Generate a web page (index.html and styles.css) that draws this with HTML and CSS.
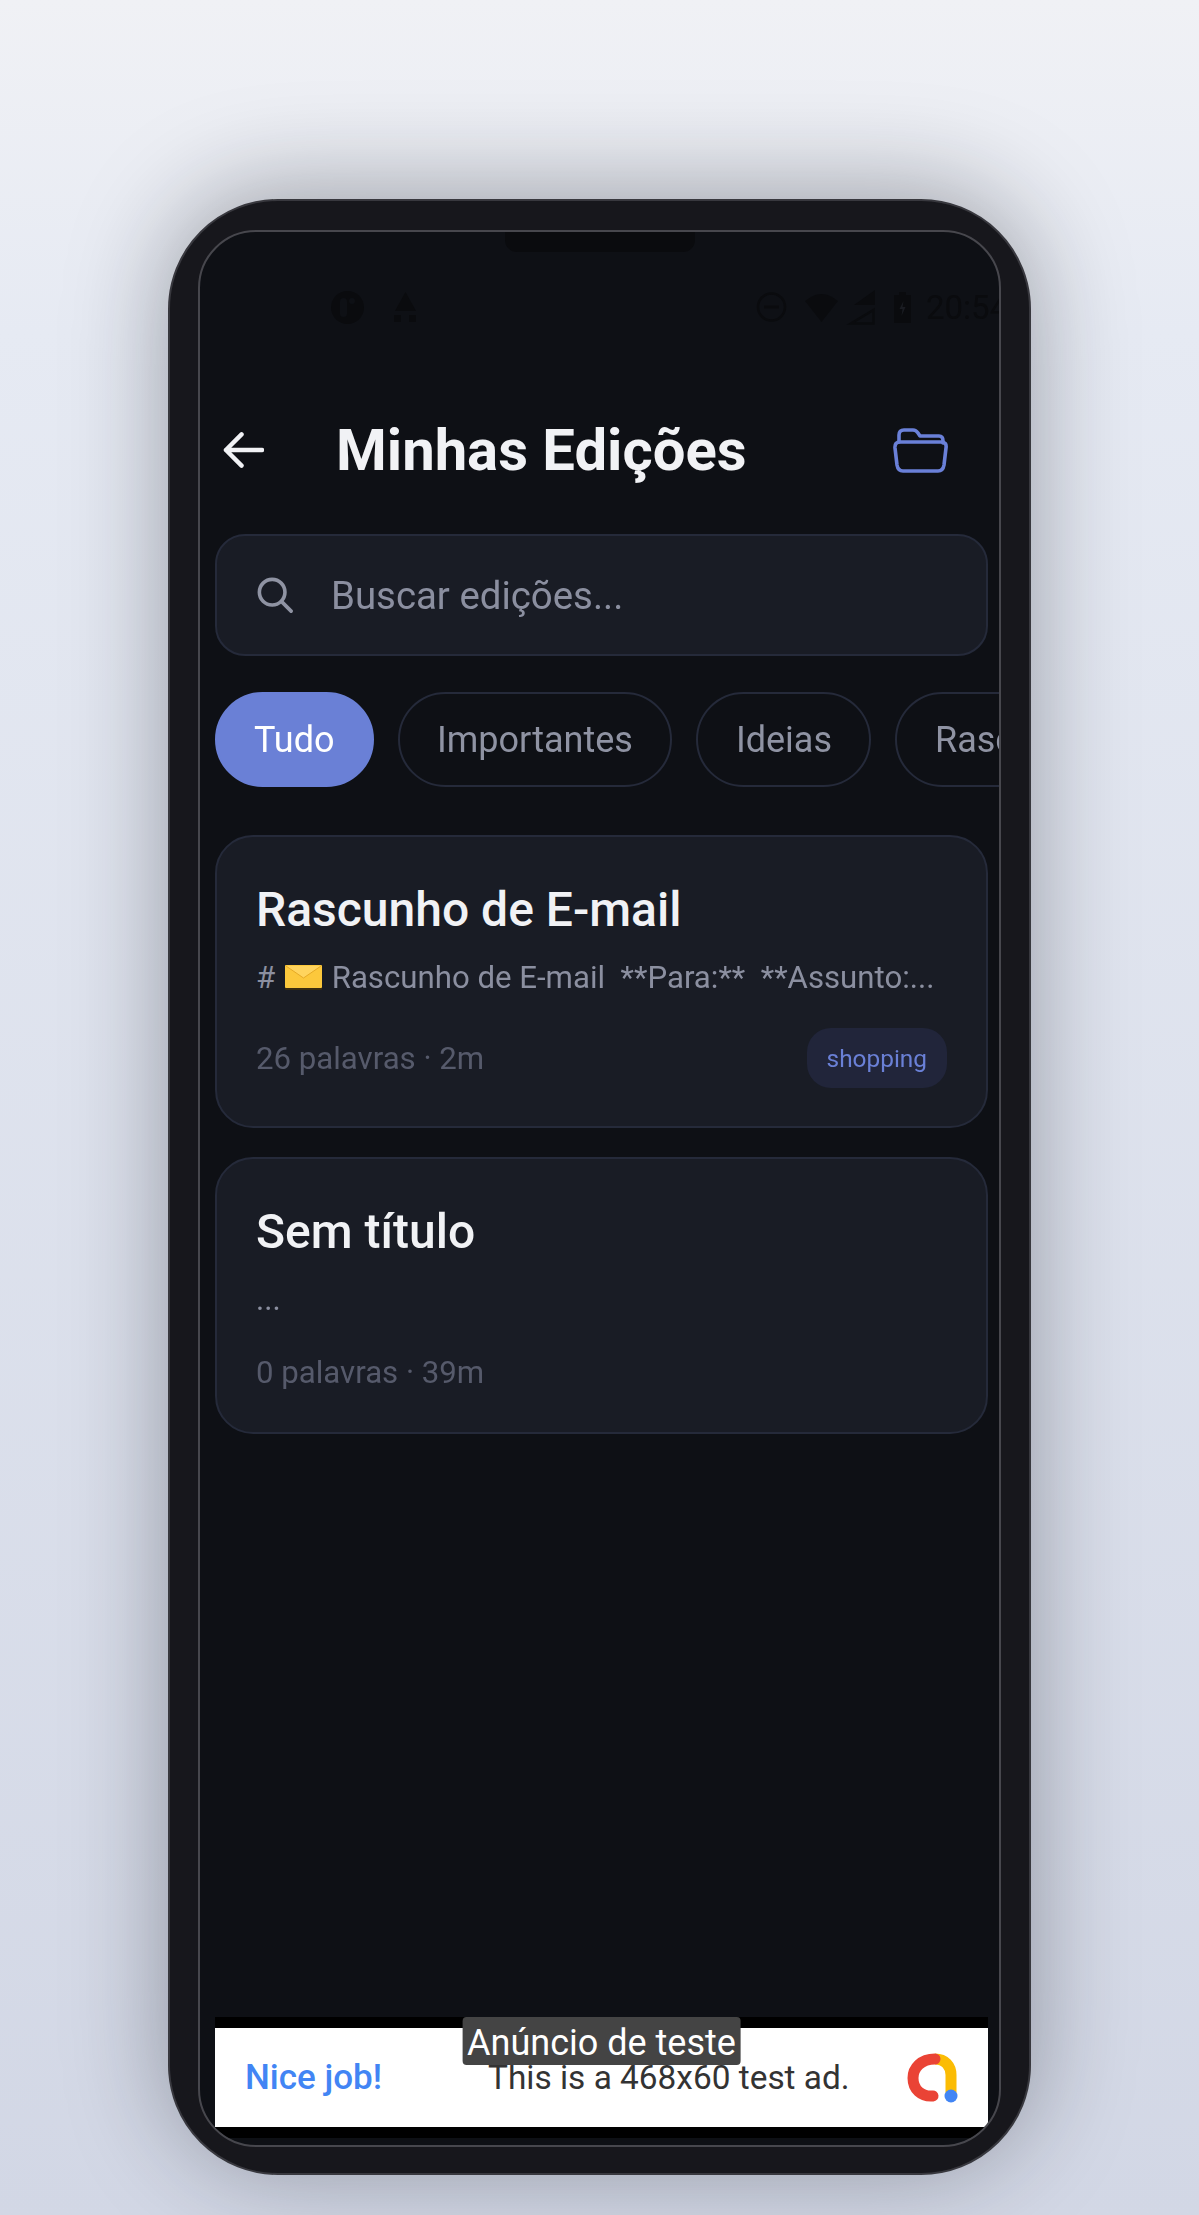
FILE: index.html
```html
<!DOCTYPE html>
<html lang="pt-BR">
<head>
  <meta charset="UTF-8">
  <title>Minhas Edições</title>
  <link rel="stylesheet" href="styles.css">
</head>
<body>
  <div class="phone">
    <div class="screen">
      <div class="notch"></div>

      <div class="status-bar">
        <div class="status-left">
          <svg class="st-clock" viewBox="0 0 33 33"><circle cx="16.5" cy="16.5" r="16.5"/><rect x="9" y="7" width="7" height="19" rx="3.5" fill="#0e1015"/><circle cx="21" cy="10" r="3" fill="#0e1015"/></svg>
          <svg class="st-warn" viewBox="0 0 25 30"><path d="M12.5 0 L23 19 H2 Z"/><rect x="1" y="23" width="7" height="7"/><rect x="16" y="23" width="7" height="7"/></svg>
        </div>
        <div class="status-right">
          <svg class="st-dnd" viewBox="0 0 31 30"><circle cx="15.5" cy="15" r="13.5" fill="none" stroke="#0a0b0e" stroke-width="2.5"/><rect x="8" y="13.5" width="15" height="3"/></svg>
          <svg class="st-wifi" viewBox="0 0 33 30"><path d="M16.5 30 L0 9 Q16.5 -5 33 9 Z"/></svg>
          <svg class="st-signal" viewBox="0 0 29 35"><path d="M29 0 V15 H8 Z"/><path d="M27.5 20 V33.5 H5 Z" fill="none" stroke="#0a0b0e" stroke-width="2.5"/></svg>
          <svg class="st-batt" viewBox="0 0 17 31"><path d="M5 0 H12 V3 H17 V31 H0 V3 H5 Z"/><path d="M9.5 9 L5.5 17 H8.5 L7.5 24 L11.5 15 H8.5 Z" fill="#1a1c22"/></svg>
          <span class="st-time">20:54</span>
        </div>
      </div>

      <div class="topbar">
        <svg class="back-icon" viewBox="0 0 42 38" fill="none" stroke="#f1f2f5" stroke-width="4.5" stroke-linecap="round" stroke-linejoin="round"><path d="M40 19 H3 M19 3 L3 19 L19 35"/></svg>
        <h1 class="page-title">Minhas Edições</h1>
        <svg class="folder-icon" viewBox="0 0 55 45" fill="none" stroke="#6a80d8" stroke-width="3.6" stroke-linejoin="round" stroke-linecap="round"><path d="M6 14 V7 Q6 2 11 2 H20 Q23 2 25 5 L27 8 H46 Q50 8 50 13 V15"/><path d="M7 14 H48 Q54 14 53 20 L51 37 Q50 43 45 43 H10 Q5 43 4 37 L2 20 Q1.5 14 7 14 Z"/></svg>
      </div>

      <div class="search">
        <svg class="search-icon" viewBox="0 0 38 38" fill="none" stroke="#8f93a3" stroke-width="3.8" stroke-linecap="round"><circle cx="16" cy="16" r="13.5"/><path d="M26 26 L36 36"/></svg>
        <span class="search-text">Buscar edições...</span>
      </div>

      <div class="chips">
        <span class="chip chip-active">Tudo</span>
        <span class="chip">Importantes</span>
        <span class="chip">Ideias</span>
        <span class="chip">Rascunhos</span>
      </div>

      <div class="card card-first">
        <div class="card-title">Rascunho de E-mail</div>
        <div class="card-preview"># <svg class="mail-emoji" viewBox="0 0 37 25"><rect y="1" width="37" height="24" rx="1" fill="#3a2c10"/><rect width="37" height="23" rx="1" fill="#fcc83c"/><path d="M1 1 L18.5 13 L36 1" fill="#ffd45e" stroke="#e6aa26" stroke-width="1"/></svg> Rascunho de E-mail &nbsp;**Para:** &nbsp;**Assunto:...</div>
        <div class="card-meta">
          <span class="meta-text">26 palavras · 2m</span>
          <span class="tag">shopping</span>
        </div>
      </div>

      <div class="card card-second">
        <div class="card-title">Sem título</div>
        <div class="card-preview">...</div>
        <div class="card-meta">
          <span class="meta-text">0 palavras · 39m</span>
        </div>
      </div>

      <div class="ad-band">
        <span class="ad-label">Anúncio de teste</span>
        <div class="ad">
          <span class="ad-nice">Nice job!</span>
          <span class="ad-text">This is a 468x60 test ad.</span>
          <svg class="ad-logo" viewBox="0 0 51 50" fill="none" stroke-width="11"><path d="M28 6 C38 6 44 13 44 22 V42" stroke="#fbbc04"/><path d="M28 6 C14 6 6 15 6 25 C6 36 14 44 26 43" stroke="#ea4335" stroke-linecap="round"/><circle cx="44" cy="43" r="6.5" fill="#4285f4"/></svg>
        </div>
      </div>
    </div>
  </div>
</body>
</html>
```

FILE: styles.css
```css
* { box-sizing: border-box; }
html, body { margin: 0; height: 2215px; overflow: hidden; }
body {
  font-family: Roboto, "Noto Sans", sans-serif;
  background: linear-gradient(180deg, #f0f1f5 0%, #e6eaf3 15%, #d2d7e5 100%);
  padding-top: 199px;
}
.phone {
  width: 863px;
  height: 1976px;
  margin: 0 auto;
  padding: 29px 28px 26px;
  background: #17171c;
  border: 2px solid #38383e;
  border-radius: 110px;
  box-shadow: 0 -8px 100px rgba(20, 22, 30, 0.36);
  filter: blur(0.5px);
}
.screen {
  position: relative;
  display: flex;
  flex-direction: column;
  height: 100%;
  padding: 0 11px 7px 15px;
  background: #0e1015;
  border: 2px solid #47474d;
  border-radius: 58px;
  overflow: hidden;
}
.notch {
  position: absolute;
  top: 0;
  left: 305px;
  width: 190px;
  height: 20px;
  background: #0a0b0e;
  border-radius: 0 0 12px 12px;
}

/* status bar is almost invisible in the source */
.status-bar {
  display: flex;
  justify-content: space-between;
  align-items: center;
  height: 36px;
  margin: 57px -11px 0 0;
  fill: #0a0b0e;
  color: #0a0b0e;
}
.status-left { display: flex; align-items: center; gap: 29px; padding-left: 116px; }
.status-right { display: flex; align-items: center; width: 243px; flex: none; overflow: hidden; }
.status-bar svg { flex: none; }
.st-clock { width: 33px; height: 33px; }
.st-warn { width: 25px; height: 30px; }
.st-dnd { width: 31px; height: 30px; }
.st-wifi { width: 33px; height: 30px; margin-left: 18px; }
.st-signal { width: 29px; height: 35px; margin-left: 8px; }
.st-batt { width: 17px; height: 31px; margin-left: 19px; }
.st-time { font-size: 33px; margin-left: 15px; white-space: nowrap; }

.topbar {
  display: flex;
  align-items: center;
  height: 70px;
  margin-top: 90px;
}
.back-icon { width: 41px; height: 38px; margin-left: 8px; flex: none; }
.page-title {
  margin: 0 0 0 72px;
  font-size: 58px;
  font-weight: 700;
  color: #f1f2f5;
  white-space: nowrap;
}
.folder-icon { width: 55px; height: 45px; margin-left: auto; margin-right: 40px; flex: none; }

.search {
  display: flex;
  align-items: center;
  height: 122px;
  margin-top: 49px;
  padding-left: 40px;
  background: #191c25;
  border: 2px solid #252a3a;
  border-radius: 30px;
}
.search-icon { width: 36px; height: 36px; flex: none; }
.search-text { margin-left: 38px; font-size: 38.4px; color: #8b8fa0; }

.chips {
  display: flex;
  gap: 24px;
  margin: 36px -11px 0 0;
  overflow: hidden;
}
.chip {
  flex: none;
  display: flex;
  align-items: center;
  height: 95px;
  padding: 0 37.5px;
  font-size: 36px;
  color: #8f93a3;
  border: 2px solid #252a3a;
  border-radius: 48px;
}
.chip-active { padding: 0 37px; background: #6a80d6; border-color: #6a80d6; color: #fff; }

.card {
  background: #191c25;
  border: 2px solid #252a3a;
  border-radius: 38px;
  padding: 0 39px;
}
.card-first { height: 293px; margin-top: 48px; }
.card-second { height: 277px; margin-top: 29px; }
.card-title {
  margin-top: 46px;
  font-size: 48px;
  line-height: 54px;
  font-weight: 500;
  color: #f1f2f5;
}
.card-preview {
  display: flex;
  align-items: center;
  gap: 2px;
  height: 40px;
  margin-top: 20px;
  font-size: 31.2px;
  color: #8b8fa0;
  white-space: pre;
}
.mail-emoji { width: 37px; height: 25px; flex: none; }
.card-meta {
  display: flex;
  justify-content: space-between;
  align-items: center;
  height: 60px;
  margin-top: 31px;
}
.card-second .card-meta { margin-top: 23px; }
.meta-text { font-size: 31.2px; color: #565a6b; }
.tag {
  display: flex;
  align-items: center;
  height: 60px;
  padding: 0 20px;
  font-size: 24.4px;
  color: #6a80d6;
  background: #21253a;
  border-radius: 24px;
}

.ad-band {
  position: relative;
  margin-top: auto;
  padding: 11px 0;
  background: #000;
}
.ad-label {
  position: absolute;
  top: 0;
  left: 50%;
  transform: translateX(-50%);
  padding: 0 5px;
  height: 48px;
  line-height: 52px;
  font-size: 36px;
  color: #fff;
  background: #444;
  border-radius: 4px;
  white-space: nowrap;
}
.ad {
  display: flex;
  align-items: center;
  height: 99px;
  padding: 0 30px;
  background: #fff;
}
.ad-nice { font-size: 35px; font-weight: 500; color: #4285f4; }
.ad-text { margin-left: 106px; font-size: 33.4px; color: #333; }
.ad-logo { width: 51px; height: 50px; margin-left: auto; flex: none; }
```
